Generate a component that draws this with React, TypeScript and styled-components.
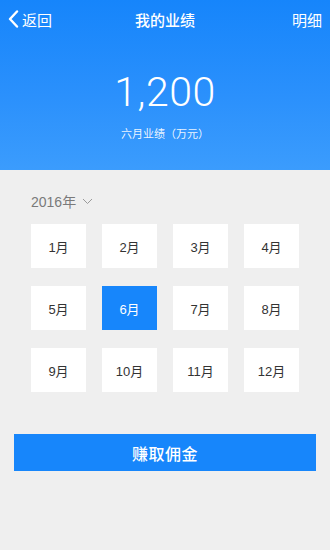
import React from "react";
import styled, { createGlobalStyle } from "styled-components";

const Global = createGlobalStyle`
  html, body { margin: 0; padding: 0; background: #efefef; }
  body { font-family: "Liberation Sans", "Noto Sans CJK SC", sans-serif; }
  * { box-sizing: border-box; }
`;

const Page = styled.div`
  width: 330px;
  min-height: 550px;
  background: #efefef;
  display: flex;
  flex-direction: column;
`;

const Header = styled.header`
  height: 170px;
  background: linear-gradient(180deg, #1685fb 0%, #2a90fc 55%, #3b9cfd 100%);
  color: #fff;
  display: flex;
  flex-direction: column;
`;

const Nav = styled.div`
  height: 38px;
  display: grid;
  grid-template-columns: 1fr auto 1fr;
  align-items: center;
  padding: 0 8px 0 8px;
  font-family: "Noto Sans CJK SC", sans-serif;
`;

const Back = styled.div`
  display: flex;
  align-items: center;
  gap: 3px;
  font-size: 15px;
`;

const Title = styled.div`
  font-size: 15px;
  font-weight: 500;
`;

const Right = styled.div`
  justify-self: end;
  font-size: 15px;
`;

const Amount = styled.div`
  margin-top: 30px;
  text-align: center;
  font-family: Roboto, "Noto Sans", sans-serif;
  font-weight: 300;
  font-size: 41px;
  line-height: 48px;
  letter-spacing: 0.5px;
`;

const Caption = styled.div`
  margin-top: 10px;
  text-align: center;
  font-family: "Noto Sans CJK SC", sans-serif;
  font-size: 11px;
  line-height: 14px;
  color: rgba(255, 255, 255, 0.92);
`;

const Body = styled.main`
  padding: 21px 31px 0 31px;
  display: flex;
  flex-direction: column;
`;

const Year = styled.div`
  display: flex;
  align-items: center;
  gap: 6px;
  height: 20px;
  font-size: 14px;
  color: #7a7a7a;
`;

const Grid = styled.div`
  margin-top: 13px;
  display: grid;
  grid-template-columns: repeat(4, 55px);
  column-gap: 16px;
  row-gap: 18px;
`;

const Cell = styled.div<{ $active?: boolean }>`
  height: 44px;
  display: flex;
  align-items: center;
  justify-content: center;
  font-size: 13px;
  background: ${(p) => (p.$active ? "#1786fb" : "#ffffff")};
  color: ${(p) => (p.$active ? "#ffffff" : "#333333")};
`;

const Button = styled.button`
  margin: 42px 14px 0 14px;
  height: 37px;
  border: none;
  background: #1786fb;
  color: #fff;
  font-family: "Noto Sans CJK SC", sans-serif;
  font-size: 16px;
  font-weight: 500;
  letter-spacing: 0.5px;
`;

const months = Array.from({ length: 12 }, (_, i) => i + 1);

export default function App() {
  return (
    <Page>
      <Global />
      <Header>
        <Nav>
          <Back>
            <svg width="11" height="18" viewBox="0 0 11 18">
              <path d="M9 1.5 L2 9 L9 16.5" stroke="#fff" strokeWidth="2.4" fill="none" strokeLinecap="round" strokeLinejoin="round" />
            </svg>
            返回
          </Back>
          <Title>我的业绩</Title>
          <Right>明细</Right>
        </Nav>
        <Amount>1,200</Amount>
        <Caption>六月业绩（万元）</Caption>
      </Header>
      <Body>
        <Year>
          2016年
          <svg width="11" height="7" viewBox="0 0 11 7">
            <path d="M1 1 L5.5 5.5 L10 1" stroke="#9a9a9a" strokeWidth="1" fill="none" />
          </svg>
        </Year>
        <Grid>
          {months.map((m) => (
            <Cell key={m} $active={m === 6}>
              {m}月
            </Cell>
          ))}
        </Grid>
      </Body>
      <Button>赚取佣金</Button>
    </Page>
  );
}
